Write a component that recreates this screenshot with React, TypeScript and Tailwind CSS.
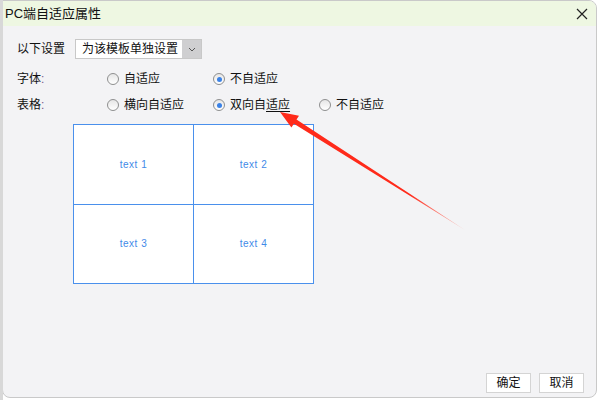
import React from 'react';

const font = { fontFamily: '"Liberation Sans", "Noto Sans CJK SC", sans-serif' };

const Radio: React.FC<{ checked?: boolean; label: React.ReactNode }> = ({ checked, label }) => (
  <div className="flex items-center w-[106px] gap-[5px]">
    <span className="w-[12px] h-[12px] rounded-full border border-[#8e8f8f] bg-gradient-to-b from-[#e6e6e6] to-white flex items-center justify-center">
      {checked && <span className="w-[5px] h-[5px] rounded-full bg-[#3b82e6]" />}
    </span>
    <span className="text-[12px] text-[#111]">{label}</span>
  </div>
);

const Cell: React.FC<{ text: string }> = ({ text }) => (
  <div className="bg-white flex items-center justify-center text-[10px] tracking-[0.5px] text-[#3f8ae8]">
    {text}
  </div>
);

export default function App() {
  return (
    <div className="w-[600px] h-[400px] bg-white relative overflow-hidden" style={font}>
      <div className="absolute left-0 top-0 w-[3px] h-[400px] bg-[#d8d8d8]" />
      <div className="ml-[2px] w-[595px] h-[398px] border border-[#c9c9c9] rounded-r-[8px] rounded-bl-[8px] bg-[#f3f3f5] flex flex-col overflow-hidden">
        <div className="h-[25px] bg-[#eef7e2] flex items-center justify-between pl-[2px] pr-[8px]">
          <span className="text-[13px] text-[#111]">PC端自适应属性</span>
          <svg width="12" height="12" viewBox="0 0 12 12">
            <path d="M1 1 L11 11 M11 1 L1 11" stroke="#222" strokeWidth="1.2" />
          </svg>
        </div>

        <div className="flex flex-col pl-[14px] pt-[13px]">
          <div className="flex items-center h-[20px]">
            <span className="text-[12px] text-[#111] w-[58px]">以下设置</span>
            <div className="flex h-[20px] border border-[#c8c8c8]">
              <span className="bg-white pl-[6px] pr-[4px] text-[12px] text-[#111] flex items-center whitespace-nowrap">为该模板单独设置</span>
              <span className="w-[19px] bg-[#cfcfd1] flex items-center justify-center">
                <svg width="8" height="5" viewBox="0 0 8 5">
                  <path d="M1 1 L4 4 L7 1" stroke="#555" fill="none" strokeWidth="1" />
                </svg>
              </span>
            </div>
          </div>

          <div className="flex items-center h-[20px] mt-[10px]">
            <span className="text-[12px] text-[#111] w-[90px]">字体<span className="text-[#7a5a8a]">:</span></span>
            <Radio label="自适应" />
            <Radio checked label="不自适应" />
          </div>

          <div className="flex items-center h-[20px] mt-[6px]">
            <span className="text-[12px] text-[#111] w-[90px]">表格<span className="text-[#7a5a8a]">:</span></span>
            <Radio label="横向自适应" />
            <Radio checked label={<>双向自<span className="underline underline-offset-2">适应</span></>} />
            <Radio label="不自适应" />
          </div>

          <div className="ml-[56px] mt-[9px] w-[241px] h-[160px] grid grid-cols-2 grid-rows-2 border border-[#4a90ec] bg-[#4a90ec] gap-[1px]">
            <Cell text="text 1" />
            <Cell text="text 2" />
            <Cell text="text 3" />
            <Cell text="text 4" />
          </div>
        </div>

        <div className="flex-1" />
        <div className="flex justify-end gap-[8px] pr-[12px] pb-[4px]">
          <button className="w-[45px] h-[20px] bg-white border border-[#d4d4d4] text-[12px] text-[#111]">确定</button>
          <button className="w-[45px] h-[20px] bg-white border border-[#d4d4d4] text-[12px] text-[#111]">取消</button>
        </div>
      </div>

      <svg className="absolute left-0 top-0 pointer-events-none" width="600" height="400">
        <defs>
          <linearGradient id="arr" x1="465" y1="230" x2="280" y2="112" gradientUnits="userSpaceOnUse">
            <stop offset="0" stopColor="#ff6a5a" stopOpacity="0.4" />
            <stop offset="0.3" stopColor="#ff2a1a" />
            <stop offset="1" stopColor="#ff2a1a" />
          </linearGradient>
        </defs>
        <polygon
          points="280,112 299,115.8 296.5,119.6 465,230 293.9,123.8 291.4,127.6"
          fill="url(#arr)"
        />
      </svg>
    </div>
  );
}
